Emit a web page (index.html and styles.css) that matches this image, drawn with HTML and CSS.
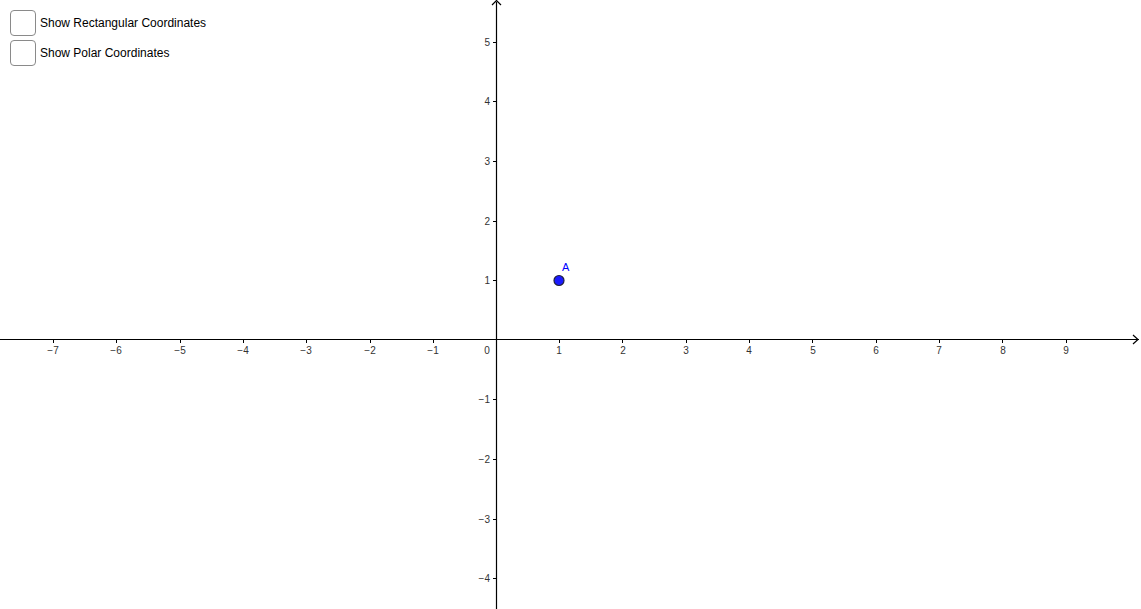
FILE: index.html
```html
<!DOCTYPE html>
<html>
<head>
<meta charset="utf-8">
<link rel="stylesheet" href="styles.css">
</head>
<body>
<div class="app">
  <svg class="graph" width="1141" height="609" viewBox="0 0 1141 609" xmlns="http://www.w3.org/2000/svg">
    <g class="axes" stroke="#000" stroke-width="1.2" fill="none">
      <line x1="0" y1="339.5" x2="1139" y2="339.5"/>
      <line x1="496.5" y1="2" x2="496.5" y2="609"/>
      <polyline points="1133,335 1138,339.5 1133,344"/>
      <polyline points="492,5 496.5,0.5 501,5"/>
    </g>
    <g class="ticks" stroke="#000" stroke-width="1">
      <line x1="53.5" y1="339" x2="53.5" y2="343"/>
      <line x1="116.5" y1="339" x2="116.5" y2="343"/>
      <line x1="180.5" y1="339" x2="180.5" y2="343"/>
      <line x1="243.5" y1="339" x2="243.5" y2="343"/>
      <line x1="306.5" y1="339" x2="306.5" y2="343"/>
      <line x1="370.5" y1="339" x2="370.5" y2="343"/>
      <line x1="433.5" y1="339" x2="433.5" y2="343"/>
      <line x1="559.5" y1="339" x2="559.5" y2="343"/>
      <line x1="622.5" y1="339" x2="622.5" y2="343"/>
      <line x1="686.5" y1="339" x2="686.5" y2="343"/>
      <line x1="749.5" y1="339" x2="749.5" y2="343"/>
      <line x1="812.5" y1="339" x2="812.5" y2="343"/>
      <line x1="876.5" y1="339" x2="876.5" y2="343"/>
      <line x1="939.5" y1="339" x2="939.5" y2="343"/>
      <line x1="1002.5" y1="339" x2="1002.5" y2="343"/>
      <line x1="1066.5" y1="339" x2="1066.5" y2="343"/>
      <line x1="493" y1="42.5" x2="496" y2="42.5"/>
      <line x1="493" y1="101.5" x2="496" y2="101.5"/>
      <line x1="493" y1="161.5" x2="496" y2="161.5"/>
      <line x1="493" y1="221.5" x2="496" y2="221.5"/>
      <line x1="493" y1="280.5" x2="496" y2="280.5"/>
      <line x1="493" y1="399.5" x2="496" y2="399.5"/>
      <line x1="493" y1="459.5" x2="496" y2="459.5"/>
      <line x1="493" y1="519.5" x2="496" y2="519.5"/>
      <line x1="493" y1="578.5" x2="496" y2="578.5"/>
    </g>
    <g class="xlabels">
      <text x="53" y="354">−7</text>
      <text x="116" y="354">−6</text>
      <text x="180" y="354">−5</text>
      <text x="243" y="354">−4</text>
      <text x="306" y="354">−3</text>
      <text x="370" y="354">−2</text>
      <text x="433" y="354">−1</text>
      <text x="487" y="354">0</text>
      <text x="559" y="354">1</text>
      <text x="623" y="354">2</text>
      <text x="686" y="354">3</text>
      <text x="749" y="354">4</text>
      <text x="813" y="354">5</text>
      <text x="876" y="354">6</text>
      <text x="939" y="354">7</text>
      <text x="1003" y="354">8</text>
      <text x="1066" y="354">9</text>
    </g>
    <g class="ylabels">
      <text x="490" y="46">5</text>
      <text x="490" y="105">4</text>
      <text x="490" y="165">3</text>
      <text x="490" y="225">2</text>
      <text x="490" y="284">1</text>
      <text x="490" y="403">−1</text>
      <text x="490" y="463">−2</text>
      <text x="490" y="523">−3</text>
      <text x="490" y="582">−4</text>
    </g>
    <circle cx="559" cy="280.5" r="5" fill="#1a1aff" stroke="#202040" stroke-width="1.2"/>
    <text class="pointlabel" x="562" y="271">A</text>
  </svg>
  <div class="panel">
    <label class="check"><span class="box"></span><span class="caption">Show Rectangular Coordinates</span></label>
    <label class="check"><span class="box"></span><span class="caption">Show Polar Coordinates</span></label>
  </div>
</div>
</body>
</html>
```
FILE: styles.css
```css
html, body {
  margin: 0;
  padding: 0;
  background: #fff;
  font-family: "Liberation Sans", Arial, sans-serif;
}
.app {
  position: relative;
  width: 1141px;
  height: 609px;
  overflow: hidden;
}
.graph {
  display: block;
}
.xlabels text {
  font-family: "Liberation Sans", Arial, sans-serif;
  font-size: 10px;
  fill: #333;
  text-anchor: middle;
}
.ylabels text {
  font-family: "Liberation Sans", Arial, sans-serif;
  font-size: 10px;
  fill: #333;
  text-anchor: end;
}
.pointlabel {
  font-family: "Liberation Sans", Arial, sans-serif;
  font-size: 11px;
  fill: #0000ff;
}
.panel {
  position: absolute;
  left: 10px;
  top: 10px;
  display: flex;
  flex-direction: column;
  gap: 4px;
}
.check {
  display: flex;
  align-items: center;
  gap: 4px;
}
.box {
  width: 24px;
  height: 24px;
  border: 1px solid #8a8a8a;
  border-radius: 4px;
  background: #fff;
}
.caption {
  font-size: 12px;
  color: #000;
}
```
